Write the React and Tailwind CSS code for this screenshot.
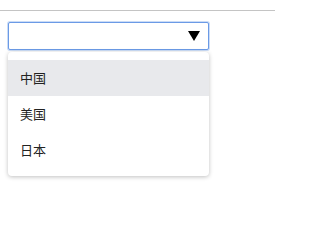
export default function App() {
  const items = ["中国", "美国", "日本"];
  return (
    <div className="w-[275px] h-[218px] bg-white font-['Noto_Sans_CJK_SC',sans-serif]">
      <div className="h-[10px]" />
      <div className="border-t border-[#c4c4c4]" />
      <div className="pt-[11px] pl-[8px]">
        <div className="relative w-[201px]">
          <div className="h-[28px] border border-[#6b9ae6] rounded-[2px] flex items-center justify-end pr-[8px] bg-white shadow-[0_0_0_1px_rgba(107,154,230,0.35)]">
            <svg width="12" height="10" viewBox="0 0 12 10">
              <polygon points="0,0 12,0 6,10" fill="#000" />
            </svg>
          </div>
          <div className="mt-[2px] rounded-[4px] bg-white shadow-[0_1px_4px_rgba(0,0,0,0.25)] py-[8px]">
            {items.map((t, i) => (
              <div
                key={t}
                className={`h-[36px] flex items-center pl-[12px] text-[13px] text-[#222] ${i === 0 ? "bg-[#e8e9ec]" : ""}`}
              >
                {t}
              </div>
            ))}
          </div>
        </div>
      </div>
    </div>
  );
}
